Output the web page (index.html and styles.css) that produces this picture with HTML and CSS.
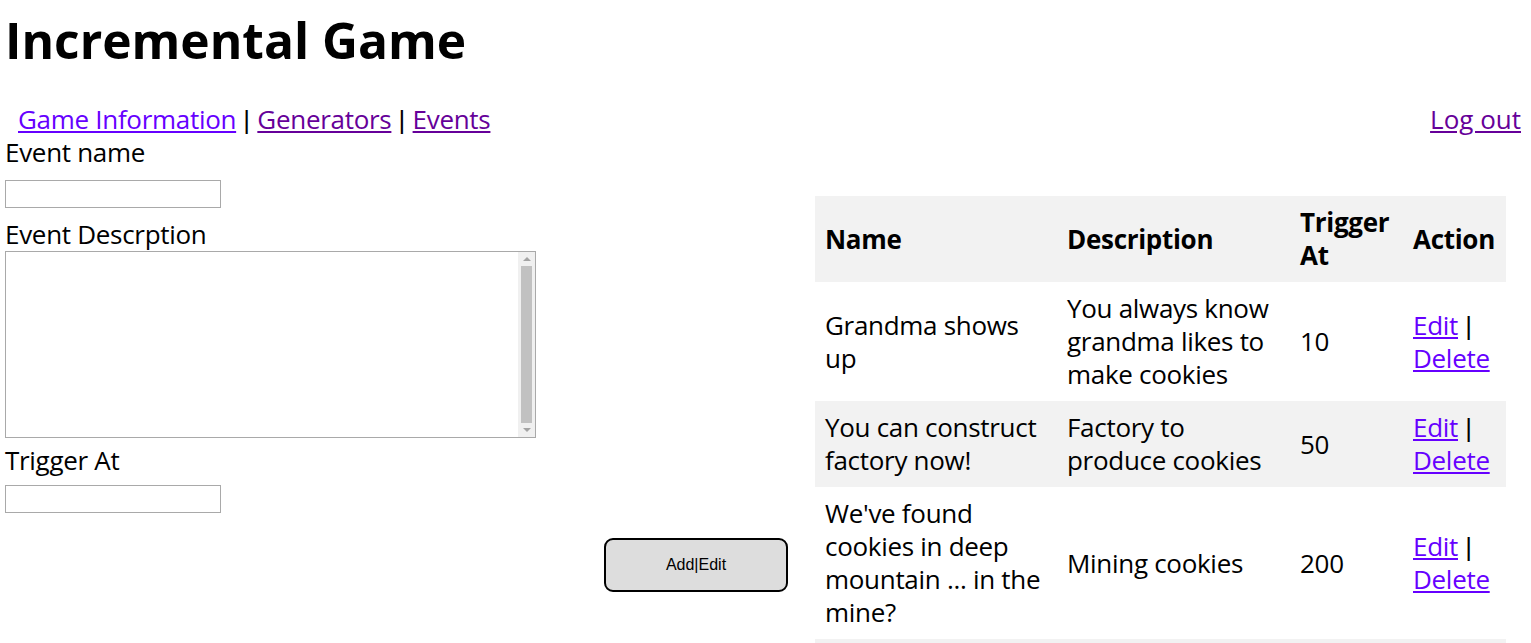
FILE: index.html
```html
<!DOCTYPE html>
<html lang="en">
<head>
<meta charset="utf-8">
<title>Incremental Game</title>
<link rel="stylesheet" href="styles.css">
</head>
<body>
<h1 class="title">Incremental Game</h1>
<nav class="nav">
  <div class="nav-links">
    <a class="link" href="#info">Game Information</a><span class="sep"> | </span><a class="link visited" href="#generators">Generators</a><span class="sep"> | </span><a class="link visited" href="#events">Events</a>
  </div>
  <a class="link visited logout" href="#logout">Log out</a>
</nav>
<main class="content">
  <form class="event-form">
    <label class="field-label" for="ev-name">Event name</label>
    <input class="text-input first-input" id="ev-name" type="text">
    <label class="field-label desc-label" for="ev-desc">Event Descrption</label>
    <div class="textarea-box">
      <textarea class="text-area" id="ev-desc"></textarea>
      <div class="scrollbar" aria-hidden="true">
        <div class="scroll-btn"><span class="arrow-up"></span></div>
        <div class="scroll-thumb"></div>
        <div class="scroll-btn"><span class="arrow-down"></span></div>
      </div>
    </div>
    <label class="field-label trigger-label" for="ev-trigger">Trigger At</label>
    <input class="text-input trigger-input" id="ev-trigger" type="text">
    <button class="submit-btn" type="button">Add|Edit</button>
  </form>
  <table class="events">
    <colgroup>
      <col class="col-name">
      <col class="col-desc">
      <col class="col-trigger">
      <col class="col-action">
    </colgroup>
    <thead>
      <tr><th>Name</th><th>Description</th><th>Trigger At</th><th>Action</th></tr>
    </thead>
    <tbody>
      <tr>
        <td>Grandma shows up</td>
        <td>You always know grandma likes to make cookies</td>
        <td>10</td>
        <td><a class="link" href="#e1">Edit</a><span class="sep"> | </span><a class="link" href="#d1">Delete</a></td>
      </tr>
      <tr>
        <td>You can construct factory now!</td>
        <td>Factory to produce cookies</td>
        <td>50</td>
        <td><a class="link" href="#e2">Edit</a><span class="sep"> | </span><a class="link" href="#d2">Delete</a></td>
      </tr>
      <tr>
        <td>We've found cookies in deep mountain ... in the mine?</td>
        <td>Mining cookies</td>
        <td>200</td>
        <td><a class="link" href="#e3">Edit</a><span class="sep"> | </span><a class="link" href="#d3">Delete</a></td>
      </tr>
      <tr class="empty-row">
        <td></td>
        <td></td>
        <td></td>
        <td></td>
      </tr>
    </tbody>
  </table>
</main>
</body>
</html>
```

FILE: styles.css
```css
html {
  overflow: hidden;
}
body {
  margin: 0;
  padding: 0 10px 0 5px;
  font-family: "Open Sans", "Noto Sans", sans-serif;
  font-size: 26px;
  line-height: 33px;
  letter-spacing: -0.3px;
  color: #000;
  background: #fff;
}
.title {
  margin: 7px 0 0 0;
  font-size: 49.7px;
  line-height: 67px;
  font-weight: 700;
  letter-spacing: 0;
}
.nav {
  display: flex;
  justify-content: space-between;
  margin-top: 29px;
  padding-left: 13px;
}
.sep {
  font-family: "Liberation Sans", Arial, sans-serif;
  letter-spacing: 0;
  line-height: 0;
}
.link {
  color: #6600ff;
  text-decoration: underline;
}
.link.visited {
  color: #660099;
}
.logout {
  letter-spacing: 0;
}
.content {
  display: flex;
  align-items: flex-start;
}
.event-form {
  flex: 0 0 795px;
  display: flex;
  flex-direction: column;
  align-items: flex-start;
}
.field-label {
  display: block;
  height: 33px;
}
.text-input {
  box-sizing: border-box;
  width: 216px;
  height: 28px;
  margin: 11px 0 0 0;
  border: 1px solid #a9a9a9;
  padding: 1px 2px;
  font-size: 14px;
}
.trigger-input {
  margin-top: 8px;
}
.desc-label {
  margin-top: 10px;
}
.trigger-label {
  margin-top: 6px;
}
.textarea-box {
  box-sizing: border-box;
  display: flex;
  width: 531px;
  height: 187px;
  border: 1px solid #a9a9a9;
  background: #fff;
}
.text-area {
  flex: 1 1 auto;
  margin: 0;
  border: 0;
  padding: 2px;
  resize: none;
  outline: none;
  font-size: 14px;
}
.scrollbar {
  flex: 0 0 17px;
  display: flex;
  flex-direction: column;
  background: #f0f0f0;
}
.scroll-btn {
  flex: 0 0 14px;
  display: flex;
  align-items: center;
  justify-content: center;
}
.arrow-up {
  width: 0;
  height: 0;
  border-left: 4px solid transparent;
  border-right: 4px solid transparent;
  border-bottom: 4px solid #a3a3a3;
}
.arrow-down {
  width: 0;
  height: 0;
  border-left: 4px solid transparent;
  border-right: 4px solid transparent;
  border-top: 4px solid #a3a3a3;
}
.scroll-thumb {
  flex: 1 1 auto;
  margin: 0 3px;
  background: #c1c1c1;
}
.submit-btn {
  align-self: flex-end;
  box-sizing: border-box;
  width: 184px;
  height: 54px;
  margin: 25px 12px 0 0;
  border: 2px solid #000;
  border-radius: 9px;
  background: #dddddd;
  font-family: "Liberation Sans", Arial, sans-serif;
  font-size: 16px;
  letter-spacing: 0;
  color: #000;
}
.events {
  margin-top: 60px;
  margin-left: 15px;
  width: 691px;
  table-layout: fixed;
  border-collapse: collapse;
}
.col-name { width: 242px; }
.col-desc { width: 233px; }
.col-trigger { width: 113px; }
.col-action { width: 103px; }
.events th,
.events td {
  padding: 10px;
  text-align: left;
  vertical-align: middle;
}
.events th {
  font-weight: 700;
  background: #f2f2f2;
}
.events tbody tr:nth-child(even) td {
  background: #f2f2f2;
}
.empty-row td {
  height: 33px;
}
```
